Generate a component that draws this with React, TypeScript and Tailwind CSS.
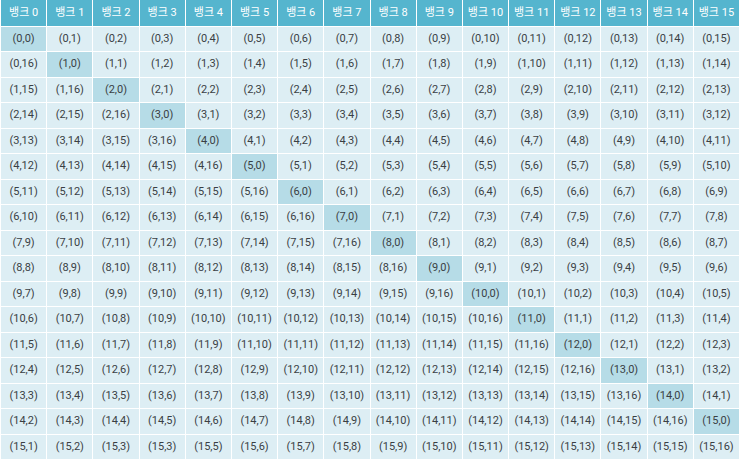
const BANKS = 16;
const PER_ROW = 17;

// build the 17 rows of (i,j) labels, laid out row-major over 16 banks
function buildRows(): { label: string; lead: boolean }[][] {
  const rows: { label: string; lead: boolean }[][] = [];
  const total = BANKS * PER_ROW;
  for (let k = 0; k < total; k++) {
    const r = Math.floor(k / BANKS);
    if (!rows[r]) rows[r] = [];
    const i = Math.floor(k / PER_ROW);
    const j = k % PER_ROW;
    rows[r].push({ label: `(${i},${j})`, lead: j === 0 });
  }
  // typo kept as in the source table
  rows[16][3].label = '(15,3)';
  return rows;
}

export default function App() {
  const rows = buildRows();

  return (
    <div className="w-[740px] h-[460px] bg-white overflow-hidden">
      <table
        className="w-full h-[460px] table-fixed border-collapse text-[11px] text-[#3a3f44]"
        style={{ fontFamily: 'Roboto, "Noto Sans CJK KR", sans-serif' }}
      >
        <thead>
          <tr className="h-[26px] bg-[#55b5ce]">
            {Array.from({ length: BANKS }, (_, b) => (
              <th
                key={b}
                className="border border-white border-t-0 font-normal text-white text-center px-0"
              >
                뱅크 {b}
              </th>
            ))}
          </tr>
        </thead>
        <tbody>
          {rows.map((row, r) => (
            <tr key={r}>
              {row.map((cell, c) => (
                <td
                  key={c}
                  className={
                    'border border-white text-center px-0 ' +
                    (cell.lead ? 'bg-[#b6dce7]' : 'bg-[#ddeef4]')
                  }
                >
                  {cell.label}
                </td>
              ))}
            </tr>
          ))}
        </tbody>
      </table>
    </div>
  );
}
